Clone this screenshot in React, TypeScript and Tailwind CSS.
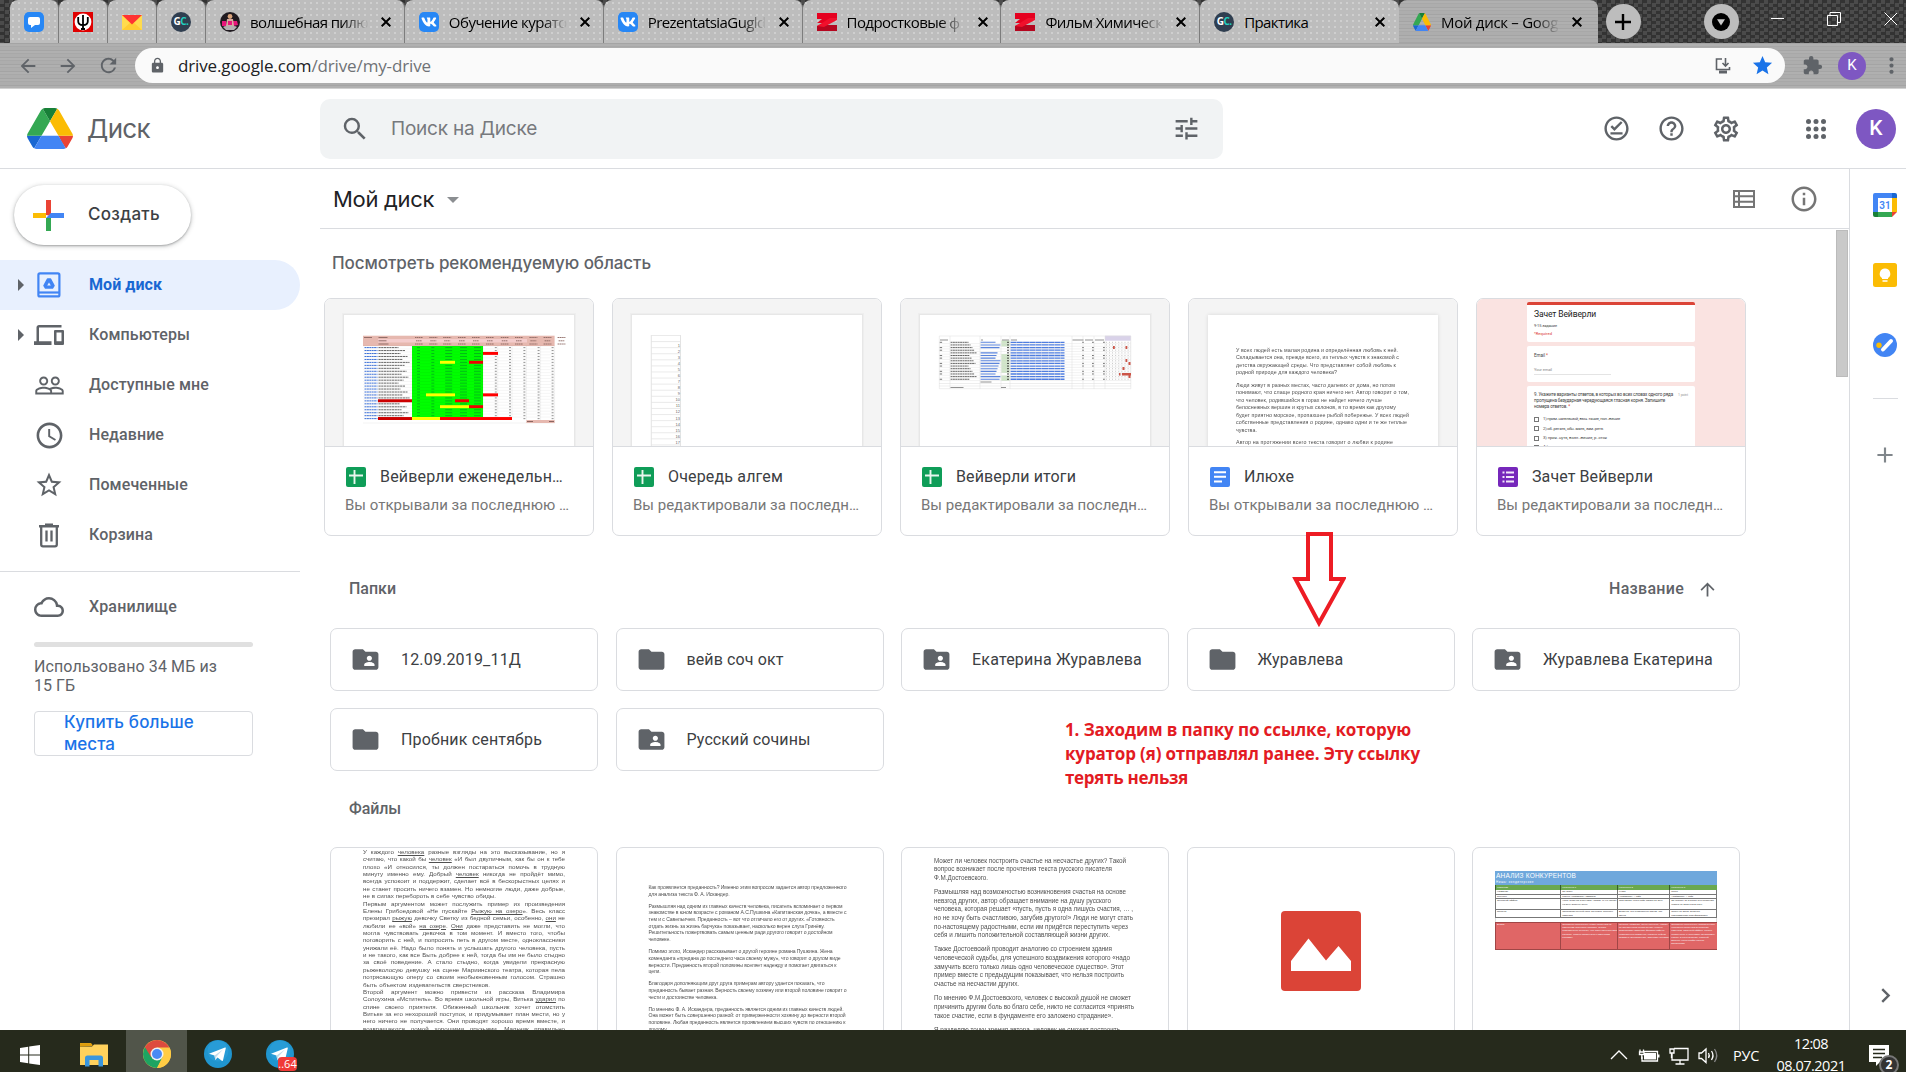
import { useLayoutEffect, useRef, useState, type ReactNode } from "react";
import {
  MdAccessTime, MdArrowBack, MdArrowForward, MdArrowUpward, MdChevronRight, MdCloudQueue, MdDevices, MdExtension,
  MdFolder, MdFolderShared, MdHelpOutline, MdInfoOutline, MdLock, MdMoreVert, MdOutlineOfflinePin,
  MdOutlineSettings, MdPeopleOutline, MdRefresh, MdSearch, MdStar, MdStarBorder, MdTune, MdAdd,
} from "react-icons/md";
import { FaVk } from "react-icons/fa";

const UI = "font-['Open_Sans','Noto_Sans',sans-serif]";
const PRODUCT = "font-['Inter','Roboto',sans-serif]";

/** Single line of text tracked (or word-spaced) to a fixed width. */
function Fit({ w, by = "letter", className = "", children }: { w: number; by?: "letter" | "word"; className?: string; children: ReactNode }) {
  const ref = useRef<HTMLSpanElement>(null);
  const [gap, setGap] = useState(0);
  useLayoutEffect(() => {
    const el = ref.current;
    if (!el) return;
    el.style.letterSpacing = "0px";
    el.style.wordSpacing = "0px";
    const text = el.textContent ?? "";
    const n = by === "letter" ? text.length : text.split(" ").length - 1;
    const g = n > 0 ? (w - el.getBoundingClientRect().width) / n : 0;
    if (by === "letter") el.style.letterSpacing = g + "px";
    else el.style.wordSpacing = g + "px";
    setGap(g);
  }, [w, by]);
  return (
    <span ref={ref} className={"inline-block shrink-0 whitespace-pre " + className} style={by === "letter" ? { letterSpacing: gap } : { wordSpacing: gap }}>
      {children}
    </span>
  );
}

function DriveLogo({ className }: { className: string }) {
  return (
    <svg viewBox="0 0 87.3 78" preserveAspectRatio="none" className={className}>
      <path d="m6.6 66.85 3.85 6.65c.8 1.4 1.95 2.5 3.3 3.3l13.75-23.8h-27.5c0 1.55.4 3.1 1.2 4.5z" fill="#1967d2" />
      <path d="m43.65 25-13.75-23.8c-1.35.8-2.5 1.9-3.3 3.3l-25.4 44a9.06 9.06 0 0 0 -1.2 4.5h27.5z" fill="#34a853" />
      <path d="m73.55 76.8c1.35-.8 2.5-1.9 3.3-3.3l1.6-2.75 7.65-13.25c.8-1.4 1.2-2.95 1.2-4.5h-27.5l5.85 11.5z" fill="#ea4335" />
      <path d="m43.65 25 13.75-23.8c-1.35-.8-2.9-1.2-4.5-1.2h-18.5c-1.6 0-3.15.45-4.5 1.2z" fill="#188038" />
      <path d="m59.8 53h-32.3l-13.75 23.8c1.35.8 2.9 1.2 4.5 1.2h50.8c1.6 0 3.15-.45 4.5-1.2z" fill="#4285f4" />
      <path d="m73.4 26.5-12.7-22c-.8-1.4-1.95-2.5-3.3-3.3l-13.75 23.8 16.15 28h27.45c0-1.55-.4-3.1-1.2-4.5z" fill="#fbbc04" />
    </svg>
  );
}

/* ---------- browser chrome ---------- */

const Vk = () => (
  <div className="flex size-5 items-center justify-center rounded-[5px] bg-[#2787f5] text-white"><FaVk size={16} /></div>
);
const Gc = () => (
  <div className={"flex size-5 items-center justify-center rounded-full bg-[#2f3e50] text-[10px] font-bold tracking-[-0.5px] text-white " + UI}>
    G<span className="text-[#21d0c0]">C.</span>
  </div>
);
const Zred = () => (
  <svg viewBox="0 0 20 20" className="size-5">
    <path d="M0 1h20v5l-8 5H0l5-4H0z" fill="#e5001f" />
    <path d="M20 6 7 13h13v6H0v-5z" fill="#b5061f" />
    <path d="M0 14 13 6h7v2L7 15z" fill="#f0102c" />
  </svg>
);
const ChatIcon = () => (
  <svg viewBox="0 0 20 20" className="size-5">
    <rect width="20" height="20" rx="5" fill="#2787f5" />
    <path d="M6 5h8a2 2 0 0 1 2 2v4a2 2 0 0 1-2 2h-3l-4 3v-3H6a2 2 0 0 1-2-2V7a2 2 0 0 1 2-2z" fill="#fff" />
  </svg>
);
const PsiIcon = () => (
  <div className="flex size-5 items-center justify-center bg-[#e00000]">
    <svg viewBox="0 0 20 20" className="size-5">
      <circle cx="10" cy="10" r="8.4" fill="#fff" />
      <path d="M10 3v14M5.2 5v4.2c0 2.6 2 3.9 4.8 3.9s4.8-1.3 4.8-3.9V5M8 17h4" stroke="#000" strokeWidth="1.8" fill="none" />
    </svg>
  </div>
);
const MailIcon = () => (
  <svg viewBox="0 0 20 20" className="size-5">
    <path d="M0 3h20v15H0z" fill="#ffdb4d" />
    <path d="M0 18 9 10h2l9 8z" fill="#fc3" />
    <path d="M0 3h20l-10 9.5z" fill="#f33" />
  </svg>
);
const PhotoIcon = () => (
  <svg viewBox="0 0 20 20" className="size-5">
    <circle cx="10" cy="10" r="10" fill="#201a20" />
    <path d="M2 9h4l1 5H2zM13 9h4l1 4-5 1z" fill="#e8157b" />
    <circle cx="10" cy="4.5" r="2.4" fill="#d9a47c" />
    <path d="M7 7h6l1 7H6z" fill="#d8a9a0" />
    <path d="M3 15c4-2 10-2 14 0l-3 3H6z" fill="#b5b0b3" />
    <path d="M8 9h4v4H8z" fill="#e8157b" />
  </svg>
);

const TAB = "bg-[#bdbdbd] bg-[radial-gradient(circle,#d0d0d0_0.7px,transparent_1px)] bg-[size:6px_6px]";
const METAL = "bg-[#ababab] bg-[repeating-linear-gradient(180deg,#a4a4a4_0_1px,#b0b0b0_1px_3px,#a8a8a8_3px_4px,#adadad_4px_7px)]";

const pinned = [<ChatIcon />, <PsiIcon />, <MailIcon />, <Gc />];
const tabs: [ReactNode, string, number, boolean?][] = [
  [<PhotoIcon />, "волшебная пилю", 118],
  [<Vk />, "Обучение курато", 118],
  [<Vk />, "PrezentatsiaGugld", 118],
  [<Zred />, "Подростковые ф", 113],
  [<Zred />, "Фильм Химическ", 117],
  [<Gc />, "Практика", 64],
  [<DriveLogo className="size-[18px]" />, "Мой диск – Goog", 117, true],
];

function TabClose() {
  return (
    <svg viewBox="0 0 10 10" className="size-[10px] shrink-0"><path d="M.7.7l8.6 8.6M9.3.7.7 9.3" stroke="#000" strokeWidth="2" /></svg>
  );
}

function TabStrip() {
  return (
    <div className="flex h-[43px] bg-[#3c3c3c] bg-[repeating-conic-gradient(#333_0_25%,#4b4b4b_0_50%)] bg-[size:9px_7px] pl-[10px]">
      {pinned.map((icon, i) => (
        <div key={i} className={"flex h-[43px] w-[49px] items-center justify-center rounded-t-[8px] border-r border-[#7d7d7d] " + TAB}>{icon}</div>
      ))}
      {tabs.map(([icon, label, w, active], i) => (
        <div key={i} className={"flex h-[43px] w-[198.85px] items-center rounded-t-[8px] pl-[14px] " + (active ? METAL : TAB + (i < 5 ? " border-r border-[#7d7d7d]" : ""))}>
          {icon}
          <div className={"ml-[10px] w-[119px] overflow-hidden text-[15px] leading-5 text-black " + UI + (i === 5 ? "" : " [mask-image:linear-gradient(90deg,#000_78%,transparent_100%)]")}>
            <Fit w={w}>{label}</Fit>
          </div>
          <div className="ml-3"><TabClose /></div>
        </div>
      ))}
      <div className="ml-2 mt-1 flex size-[35px] items-center justify-center rounded-full bg-[#bdbdbd]">
        <svg viewBox="0 0 16 16" className="size-4"><path d="M8 0v16M0 8h16" stroke="#000" strokeWidth="2.4" /></svg>
      </div>
      <div className="ml-[63px] mt-1 flex size-[35px] items-center justify-center rounded-full bg-[#bdbdbd]">
        <svg viewBox="0 0 18 18" className="size-[18px]"><circle cx="9" cy="9" r="9" fill="#000" /><path d="M5 6.2h8L9 12.4z" fill="#c9c9c9" /></svg>
      </div>
      <svg viewBox="0 0 126 14" className="ml-[32px] mt-3 h-[14px] w-[126px]" stroke="#fff" fill="none">
        <path d="M0 6.5h13M56.500 3.500h10v10h-10zM59 3V.5h10.500v10H67M113.500.5l13 13M126.500.5l-13 13" />
      </svg>
    </div>
  );
}

function Toolbar() {
  return (
    <div className={"flex h-[46px] items-center border-b border-[#d0d0d0] pl-[17px] text-[#5f6368] " + METAL}>
      <MdArrowBack size={22} />
      <MdArrowForward size={22} className="ml-[18px]" />
      <MdRefresh size={23} className="ml-[18px]" />
      <div className="ml-[15px] flex h-[35px] w-[1650px] items-center rounded-full bg-[#fafafa] pl-[14px]">
        <MdLock size={17} />
        <div className={"ml-[12px] text-[17px] leading-6 text-[#202124] " + UI}>
          <Fit w={253}>drive.google.com<span className="text-[#6f7276]">/drive/my-drive</span></Fit>
        </div>
        <svg viewBox="0 0 18 18" className="ml-auto size-[18px]" fill="none" stroke="#5f6368" strokeWidth="1.6">
          <path d="M8 2H2.500v10.500h13V10M11.500 1v7.500M8.500 6l3 3 3-3" /><path d="M5 15h8" strokeWidth="3" />
        </svg>
        <MdStar size={23} className="ml-[19px] mr-[11px] text-[#1a73e8]" />
      </div>
      <MdExtension size={21} className="ml-[17px]" />
      <div className="ml-[15px] flex size-7 items-center justify-center rounded-full bg-[#7e57c2] font-['Roboto',sans-serif] text-[15px] text-white">K</div>
      <MdMoreVert size={25} className="ml-[13px]" />
    </div>
  );
}

/* ---------- Drive header ---------- */

function Header() {
  return (
    <header className="flex h-20 items-center border-b border-[#dadce0] bg-white pl-[27px] text-[#5f6368]">
      <DriveLogo className="h-[41px] w-[46px]" />
      <div className={"ml-[14px] w-[233px] text-[26px] leading-8 " + PRODUCT}><Fit w={63}>Диск</Fit></div>
      <div className="flex h-[60px] w-[903px] items-center rounded-[10px] bg-[#f1f3f4] pl-[20px]">
        <MdSearch size={30} />
        <div className={"ml-[21px] text-[19px] leading-7 text-[#77797d] " + PRODUCT}><Fit w={146}>Поиск на Диске</Fit></div>
        <MdTune size={29} className="ml-auto mr-[22px]" />
      </div>
      <MdOutlineOfflinePin size={29} className="ml-[379px]" />
      <MdHelpOutline size={29} className="ml-[26px]" />
      <MdOutlineSettings size={30} className="ml-[25px]" />
      <svg viewBox="0 0 20 20" className="ml-[65px] size-5" fill="#5f6368">
        {[2.5, 10, 17.5].map((x) => [2.5, 10, 17.5].map((y) => <circle key={x + "-" + y} cx={x} cy={y} r="2.5" />))}
      </svg>
      <div className="ml-[30px] flex size-10 items-center justify-center rounded-full bg-[#7e57c2] font-['Roboto',sans-serif] text-[21px] font-medium text-white">K</div>
    </header>
  );
}

/* ---------- sidebar ---------- */

const MyDrive = () => (
  <svg viewBox="0 0 24 26" className="h-[26px] w-6" fill="none" stroke="#4285f4" strokeWidth="2.2">
    <rect x="1.4" y="1.400" width="21" height="23" rx="1.500" />
    <path d="M2 20.500h20" />
    <path d="M10.500 7h3l3.500 6.500-1.500 2.500h-7L7 13.500z" fill="#4285f4" strokeLinejoin="round" strokeWidth="1.500" />
    <path d="m12 10.500 1.800 3h-3.600z" fill="#e8f0fe" stroke="none" />
  </svg>
);
const Trash = () => (
  <svg viewBox="0 0 22 25" className="h-[25px] w-[22px]" fill="none" stroke="#5f6368" strokeWidth="2.400">
    <path d="M1 3.200h20M7 1.600h8" /><path d="M3.200 4v17.500q0 1.800 1.800 1.800h12q1.800 0 1.800-1.800V4M8.500 7.500v11M13.500 7.500v11" strokeWidth="2.300" />
  </svg>
);

const nav: [ReactNode, string, number, boolean, boolean][] = [
  [<MyDrive />, "Мой диск", 73, true, true],
  [<MdDevices size={30} />, "Компьютеры", 101, true, false],
  [<MdPeopleOutline size={31} />, "Доступные мне", 120, false, false],
  [<MdAccessTime size={31} />, "Недавние", 75, false, false],
  [<MdStarBorder size={30} />, "Помеченные", 99, false, false],
  [<Trash />, "Корзина", 64, false, false],
];

function Sidebar() {
  return (
    <aside className="w-[320px] shrink-0 font-['Roboto',sans-serif] text-[#5f6368]">
      <div className="ml-[14px] mt-4 flex h-[60px] w-[177px] items-center rounded-full bg-white pl-[19px] shadow-[0_1px_2px_rgba(60,64,67,0.35),0_1px_4px_1px_rgba(60,64,67,0.2)]">
        <svg viewBox="0 0 31 31" className="size-[31px]">
          <path d="M13 0h5v16l-5-1z" fill="#ea4335" /><path d="M0 13h13v5H0z" fill="#fbbc04" />
          <path d="M18 13h13v5H16z" fill="#4285f4" /><path d="M13 18h5v13h-5z" fill="#34a853" /><path d="m13 18 5-5v5z" fill="#4285f4" />
        </svg>
        <div className={"ml-[24px] text-[17px] font-medium text-[#3c4043] " + PRODUCT}><Fit w={72}>Создать</Fit></div>
      </div>
      <nav className="mt-[15px]">
        {nav.map(([icon, label, w, arrow, active]) => (
          <div key={label} className={"flex h-[50px] w-[300px] items-center rounded-r-full pl-[18px] " + (active ? "bg-[#e8f0fe] text-[#1967d2]" : "")}>
            <svg viewBox="0 0 6 12" className="h-3 w-[6px] text-[#5f6368]">{arrow && <path d="M0 0l6 6-6 6z" fill="currentColor" />}</svg>
            <div className="ml-[9px] flex w-8 justify-center">{icon}</div>
            <div className={"ml-[24px] text-[16px] leading-5 " + (active ? "font-bold" : "font-medium")}><Fit w={w}>{label}</Fit></div>
          </div>
        ))}
      </nav>
      <div className="mt-[11px] w-[300px] border-t border-[#dadce0] pl-[34px]">
        <div className="flex h-[70px] items-center">
          <MdCloudQueue size={30} />
          <div className="ml-[25px] text-[16px] font-medium"><Fit w={88}>Хранилище</Fit></div>
        </div>
        <div className="h-[5px] w-[219px] rounded-sm bg-[#e0e0e0]" />
        <div className="mt-[10px] text-[16px] leading-[19px]">
          <div><Fit w={183}>Использовано 34 МБ из</Fit></div>
          <div><Fit w={41}>15 ГБ</Fit></div>
        </div>
        <div className={"mt-[16px] h-[45px] w-[219px] rounded-[4px] border border-[#dadce0] pl-[29px] text-[17px] font-medium leading-[22px] text-[#1a73e8] " + PRODUCT}>
          <div className="-mt-px"><Fit w={130}>Купить больше</Fit></div>
          <div><Fit w={51}>места</Fit></div>
        </div>
      </div>
    </aside>
  );
}

/* ---------- suggested files ---------- */

const sheetX = [412, 426.3, 440.2, 455, 469, 483, 497.8, 512, 526.4, 540.6, 554.6];
const marks: [number, number, number, string][] = [
  [2, 483, 498, "#f00"], [5, 440, 455, "#ff0"], [5, 469, 483, "#e00"], [16, 426, 455, "#ff0"], [16, 483, 498, "#f00"],
  [18, 378, 412, "#c00"], [18, 455, 469, "#e00"], [20, 440, 469, "#ff0"], [20, 469, 483, "#e00"],
  [24, 378, 412, "#c00"], [24, 412, 440, "#ff0"], [24, 440, 512, "#f00"],
];

function SheetScores() {
  const rows = Array.from({ length: 25 }, (_, i) => 346 + i * 2.96);
  return (
    <svg viewBox="325 299 268 147" className="h-[147px] w-[268px]">
      <Page x={344} />
      <rect x="363" y="335.700" width="191.600" height="10.300" fill="#e6b8af" />
      <rect x="378" y="339" width="149" height="3.500" fill="#f4cccc" />
      {sheetX.map((x) => <path key={x} d={`M${x + 3} 337.500h8M${x + 4} 340.800h6M${x + 3} 344h8`} stroke="#8a6560" strokeWidth=".9" strokeDasharray="1.500 .4" />)}
      <path d="M364 337.500h8M378.500 337.500h9M378.500 340.800h8M378.500 344h10" stroke="#8a6560" strokeWidth=".9" />
      <rect x="412" y="346" width="71" height="71" fill="#0f0" />
      {rows.map((y, i) => (
        <g key={y}>
          <path d={`M363 ${y}h191.600`} stroke="#000" strokeOpacity=".1" strokeWidth=".4" />
          <path d={`M364.500 ${y + 1.600}h13`} stroke="#3b6fd6" strokeWidth="1" strokeDasharray="2 .4" />
          <path d={`M378.500 ${y + 1.600}h${20 + ((i * 7) % 12)}`} stroke="#555" strokeWidth=".9" strokeDasharray="2.200 .5" />
          {sheetX.slice(0, 5).map((x, k) => <path key={x} d={`M${x + 5} ${y + 1.600}h${k > 1 ? 7 : 3}`} stroke="#063" strokeOpacity=".55" strokeWidth=".8" />)}
          {sheetX.slice(6).map((x) => <path key={x} d={`M${x - 3} ${y + 1.600}h2`} stroke="#888" strokeWidth=".9" />)}
        </g>
      ))}
      {marks.map(([r, a, b, c]) => <rect key={r + "-" + a} x={a} y={346 + r * 2.960} width={b - a} height="2.960" fill={c} />)}
      <path d="M483 346v71M497.800 346v71M512 346v71M526.400 346v77M540.600 346v77M554.600 346v77M363 423h192" stroke="#000" strokeOpacity=".1" strokeWidth=".5" />
      <rect x="526.400" y="420" width="28.200" height="3" fill="#e6b8af" />
      <path d="M527 421.500h6M549 421.500h5" stroke="#8a6560" />
    </svg>
  );
}

function Page({ x }: { x: number }) {
  return (
    <>
      <rect x={x - 2} y="313" width="234" height="140" fill="#eeeeee" />
      <rect x={x - 1} y="314" width="232" height="140" fill="#e7e7e7" />
      <rect x={x} y="315" width="230" height="140" fill="#fff" />
    </>
  );
}

function SheetQueue() {
  return (
    <svg viewBox="613 299 268 147" className="h-[147px] w-[268px]">
      <Page x={632} />
      <path d="M651.300 335v112M680.500 335v112" stroke="#dcdcdc" strokeWidth=".8" />
      {Array.from({ length: 19 }, (_, i) => (
        <g key={i}>
          <path d={`M651 ${335.500 + i * 6.080}h29.500`} stroke="#e4e4e4" strokeWidth=".8" />
          {i > 0 && <text x="680" y={340.500 + i * 6.080} textAnchor="end" fontSize="4" fill="#666" fontFamily="Liberation Sans, sans-serif">{i}</text>}
        </g>
      ))}
    </svg>
  );
}

function SheetTotals() {
  const rows = Array.from({ length: 15 }, (_, i) => 342.300 + i * 2.640);
  return (
    <svg viewBox="901 299 268 147" className="h-[147px] w-[268px]">
      <Page x={920} />
      <rect x="1105" y="335.700" width="25.800" height="5" fill="#d9d2e9" />
      <path d="M1001.300 340.500h8.400v6h-8.400zM1001.300 354h8.400v19h-8.400zM1001.300 375.500h8.400v5.500h-8.400z" fill="#cfe5c7" />
      {rows.map((y, i) => (
        <g key={y}>
          <path d={`M939.300 ${y + 1.300}h191.700`} stroke="#ddd" strokeWidth=".4" />
          {i !== 3 && <path d={`M980.500 ${y}h${15 + ((i * 5) % 6)}`} stroke="#5b84dc" strokeWidth="1.100" />}
          <path d={`M1007 ${y}h2`} stroke="#444" strokeWidth="1" />
          <path d={`M1010.500 ${y}h${54 + ((i * 7) % 7)}`} stroke="#4f7ddf" strokeWidth="1.300" strokeDasharray="6 .3" />
          <path d={`M950.500 ${y}h${18 + ((i * 11) % 9)}`} stroke="#555" strokeWidth=".9" strokeDasharray="2 .4" />
          {i % 3 !== 1 && <path d={`M939.600 ${y}h2.500M1082 ${y}h2M1092 ${y}h2M1103 ${y}h2`} stroke="#666" strokeWidth=".9" />}
          <path d={`M1106 ${y}h25`} stroke="#aaa" strokeWidth=".8" strokeDasharray=".8 2.300" />
        </g>
      ))}
      <path d="M939.300 336h191.500v52.700H939.300zM950 336v53M980 336v53M1001 336v53M1010 336v53M1072 336v53M1083 336v53M1094 336v53M1105 336v53M939 383.500h192M939 386h192" fill="none" stroke="#ddd" strokeWidth=".5" />
      <path d="M940 340h8M981 340h2M1002 340h7M1011 340h6M1072.500 340h11M1085 340h8M1095 340h9M950.500 387.500h13M1001 387.500h5M980.500 382h11" stroke="#777" strokeWidth=".8" />
      <path d="M1113 346h1.800v3h-1.800zM1125.500 346h1.800v3h-1.800zM1125.500 359h1.800v3h-1.800zM1128.500 362h2v3h-2zM1122.500 367h2v3h-2zM1119 373h1.500v2.500h-1.500zM1122 373h9v2.500h-9zM1128.500 375.500h2v2.500h-2z" fill="#cc5548" />
    </svg>
  );
}

type Line = [string, number] | null;

/** Lines of a document page; null leaves a paragraph gap. */
function DocText({ lines, by = "letter", row, gap, className }: { lines: Line[]; by?: "letter" | "word"; row: number; gap: number; className: string }) {
  return (
    <div className={"text-[#505050] blur-[0.3px] font-['Liberation_Sans',sans-serif] " + className}>
      {lines.map((l, i) =>
        l === null ? <div key={i} style={{ height: gap }} /> : (
          <div key={i} className="flex items-center" style={{ height: row }}>
            <Fit w={l[1]} by={by}>{l[0].split("_").map((s, k) => (k % 2 ? <u key={k}>{s}</u> : s))}</Fit>
          </div>
        ),
      )}
    </div>
  );
}

const homeland: Line[] = [
  ["У всех людей есть малая родина и определённая любовь к ней.", 162],
  ["Складывается она, прежде всего, из теплых чувств к знакомой с", 163],
  ["детства окружающей среды. Что представляет собой любовь к", 160],
  ["родной природе для каждого человека?", 101], null,
  ["Люди живут в разных местах, часто далеких от дома, но потом", 159],
  ["понимают, что слаще родного края ничего нет. Автор говорит о том,", 173],
  ["что человек, родившийся в горах не найдет ничего лучше", 146],
  ["белоснежных вершин и крутых склонов, в то время как другому", 160],
  ["будет приятно морское, пропахшее рыбой побережье. У всех людей", 173],
  ["собственные представления о родине, однако одни и те же теплые", 171],
  ["чувства.", 21], null,
  ["Автор на протяжении всего текста говорит о любви к родине", 157],
];

function FormThumb() {
  return (
    <div className="flex h-[147px] justify-center overflow-hidden bg-[#fae3e1] pt-[3px] font-['Roboto',sans-serif] text-[#444]">
      <div className="w-[168px]">
        <div className="h-10 rounded-[2px] border-t-[3px] border-[#db4437] bg-white pl-[7px] pt-[3px]">
          <div className="text-[8.500px] leading-[12px] text-[#222]"><Fit w={62}>Зачет Вейверли</Fit></div>
          <div className="mt-[2px] text-[4px] leading-[8px]"><Fit w={23}>9-15 задание</Fit></div>
          <div className="text-[4px] leading-[8px] text-[#d93025]"><Fit w={18}>*Required</Fit></div>
        </div>
        <div className="mt-1 h-9 rounded-[2px] bg-white pl-[7px] pt-[5px] text-[4.500px] leading-[9px]">
          <div><Fit w={14}>Email <span className="text-[#d93025]">*</span></Fit></div>
          <div className="mt-[6px] w-[77px] border-b border-[#e4e4e4] text-[4px] leading-[8px] text-[#888]"><Fit w={18}>Your email</Fit></div>
        </div>
        <div className="mt-1 h-[70px] rounded-[2px] bg-white pl-[7px] pt-[6px] text-[4.600px] leading-[6.200px]">
          <div className="flex"><Fit w={139}>9. Укажите варианты ответов, в которых во всех словах одного ряда</Fit><Fit w={10} className="ml-[5px] text-[3.500px] text-[#999]">1 point</Fit></div>
          <div><Fit w={131}>пропущена безударная чередующаяся гласная корня. Запишите</Fit></div>
          <div><Fit w={36}>номера ответов. <span className="text-[#d93025]">*</span></Fit></div>
          <div className="mt-[4px]">
            {([["1) прим..нательный, выч..тание, пол..жение", 77], ["2) об..регать, обн..мать, зам..реть", 60], ["3) прик..нуть, возл..жение, р..сток", 64], ["4) зар..сли, выск..чка", 70]] as [string, number][]).map(([t, w]) => (
              <div key={t} className="flex h-[9.400px] items-center gap-[4px] text-[4.200px]"><div className="size-[5px] border border-[#777]" /><Fit w={w}>{t}</Fit></div>
            ))}
          </div>
        </div>
      </div>
    </div>
  );
}

function FileBadge({ kind }: { kind: "sheet" | "doc" | "form" }) {
  return (
    <svg viewBox="0 0 20 20" className="size-5" fill="none" stroke="#fff" strokeWidth="2">
      <rect width="20" height="20" rx="2" stroke="none" fill={kind === "sheet" ? "#0f9d58" : kind === "doc" ? "#4285f4" : "#7627bb"} />
      {kind === "sheet" && <path d="M3 8.500h14M8.500 3v14" stroke="#e8f6ee" strokeWidth="1.900" />}
      {kind === "doc" && <path d="M4 5.300h12M4 9.700h12M4 14.500h8" />}
      {kind === "form" && <path d="M4.500 5.500h2M8 5.500h8M4.500 10h2M8 10h8M4.500 14.500h2M8 14.500h8" stroke="#f1e6fa" />}
    </svg>
  );
}

function Suggested() {
  const opened: [string, number] = ["Вы открывали за последнюю …", 224];
  const edited: [string, number] = ["Вы редактировали за последн…", 226];
  const items: ["sheet" | "doc" | "form", string, number, [string, number], ReactNode][] = [
    ["sheet", "Вейверли еженедельн…", 183, opened, <SheetScores />],
    ["sheet", "Очередь алгем", 115, edited, <SheetQueue />],
    ["sheet", "Вейверли итоги", 120, edited, <SheetTotals />],
    ["doc", "Илюхе", 50, opened,
      <div className="ml-[19px] mt-4 h-[140px] w-[230px] bg-white pl-7 pt-[32px] shadow-[0_0_4px_rgba(0,0,0,0.12)]">
        <DocText lines={homeland} row={7.560} gap={4.600} className="text-[5.300px]" />
      </div>],
    ["form", "Зачет Вейверли", 121, edited, <FormThumb />],
  ];
  return (
    <div className="ml-1 flex gap-[18px]">
      {items.map(([kind, title, w, [sub, sw], thumb]) => (
        <div key={title} className="h-[238px] w-[270px] shrink-0 overflow-hidden rounded-[7px] border border-[#dadce0] bg-white">
          <div className="h-[148px] overflow-hidden border-b border-[#dadce0] bg-[#f4f4f4]">{thumb}</div>
          <div className="flex items-center pl-[21px] pt-[18px]">
            <FileBadge kind={kind} />
            <div className="ml-[14px] text-[16px] leading-6 text-[#3c4043]"><Fit w={w}>{title}</Fit></div>
          </div>
          <div className="mt-[6px] pl-[20px] text-[15px] leading-5 text-[#777]"><Fit w={sw}>{sub}</Fit></div>
        </div>
      ))}
    </div>
  );
}

/* ---------- folders and files ---------- */

const folders: [string, number, boolean][] = [
  ["12.09.2019_11Д", 120, true], ["вейв соч окт", 97, false], ["Екатерина Журавлева", 170, true], ["Журавлева", 86, false],
  ["Журавлева Екатерина", 170, true], ["Пробник сентябрь", 141, false], ["Русский сочины", 124, true],
];

const essay1: Line[] = [
  ["У каждого _человека_ разные взгляды на это высказывание, но я", 202],
  ["считаю, что какой бы _человек_ «И был двуличным, как бы он к тебе", 202],
  ["плохо «И относился, ты должен постараться помочь в трудную", 202],
  ["минуту именно ему. Добрый _человек_ никогда не пройдёт мимо,", 202],
  ["всегда успокоит и поддержит, сделает всё в бескорыстных целях и", 202],
  ["не станет просить ничего взамен. Но немногие люди, даже добрые,", 202],
  ["не в силах перебороть в себе чувство обиды.", 133],
  ["Первым аргументом может послужить пример из произведения", 202],
  ["Елены Грибоедовой «Не пускайте _Рыжую на озеро_». Весь класс", 202],
  ["презирал _рыжую_ девочку Светку из бедной семьи, особенно, _они_ не", 202],
  ["любили ее «вой» _на озере_. _Они_ даже представить не могли, что", 202],
  ["могла чувствовать девочка в том момент. И вместо того, чтобы", 202],
  ["поговорить с ней, и попросить петь в другом месте, одноклассники", 202],
  ["унижали её. Надо было понять и услышать другого человека, пусть", 202],
  ["и не такого, как все Быть добрее к ней, тогда бы им не было стыдно", 202],
  ["за своё поведение. А стало стыдно, когда увидели прекрасную", 202],
  ["рыжеволосую девушку на сцене Мариинского театра, которая пела", 202],
  ["потрясающую оперу со своим необыкновенным голосом. Страшно", 202],
  ["быть объектом издевательств сверстников.", 127],
  ["Второй аргумент можно привести из рассказа Владимира", 202],
  ["Солоухина «Мститель». Во время школьной игры, Витька _ударил_ по", 202],
  ["спине своего приятеля. Обиженный школьник хочет отомстить", 202],
  ["Витьке за его нехороший поступок, и придумывает план мести, но у", 202],
  ["него ничего не получается. Они проводят хорошо время вместе, и", 202],
  ["возвращаются домой хорошими друзьями. Мальчик правильно", 202],
];
const essay2: Line[] = [
  ["Как проявляется преданность? Именно этим вопросом задается автор предложенного", 198],
  ["для анализа текста Ф. А. Искандер.", 81], null,
  ["Размышляя над одним из главных качеств человека, писатель вспоминает о первом", 194],
  ["знакомстве в юном возрасте с романом А.С.Пушкина «Капитанская дочка», а вместе с", 198],
  ["тем и с Савельичем. Преданность – вот что отличало его от других. «Готовность", 186],
  ["отдать жизнь за жизнь барчука» показывает, насколько верен слуга Гринёву.", 176],
  ["Решительность пожертвовать самым ценным ради другого говорит о достойном", 184],
  ["человеке.", 22], null,
  ["Помимо этого, Искандер рассказывает о другой героине романа Пушкина. Жена", 184],
  ["коменданта «предана до последнего часа своему мужу», что говорит о другом виде", 192],
  ["верности. Преданность второй половины вселяет надежду и помогает двигаться к", 188],
  ["цели.", 12], null,
  ["Благодаря дополняющим друг друга примерам автору удается показать, что", 176],
  ["преданность бывает разная. Верность своему хозяину или второй половине говорит о", 198],
  ["чести и достоинстве человека.", 69], null,
  ["По мнению Ф. А. Искандера, преданность является одним из главных качеств людей.", 195],
  ["Она может быть совершенно разной: от приверженности хозяину до верности второй", 197],
  ["половине. Любая преданность является проявлением высших чувств по отношению к", 197],
  ["другому.", 19],
];
const essay3: Line[] = [
  ["Может ли человек построить счастье на несчастье других? Такой", 192],
  ["вопрос возникает после прочтения текста русского писателя", 178],
  ["Ф.М.Достоевского.", 54], null,
  ["Размышляя над возможностью возникновения счастья на основе", 192],
  ["невзгод других, автор обращает внимание на душу русского", 177],
  ["человека, которая решает «пусть, пусть я одна лишусь счастия, … ,", 199],
  ["но не хочу быть счастливою, загубив другого!» Люди не могут стать", 199],
  ["по-настоящему радостными, если им придётся переступить через", 194],
  ["себя и лишить положительной составляющей жизни других.", 176], null,
  ["Также Достоевский проводит аналогию со строением здания", 178],
  ["человеческой судьбы, для успешного воздвижения которого «надо", 196],
  ["замучить всего только лишь одно человеческое существо». Этот", 190],
  ["пример вместе с предыдущим показывает, что нельзя построить", 190],
  ["счастье на несчастии других.", 85], null,
  ["По мнению Ф.М.Достоевского, человек с высокой душой не сможет", 197],
  ["причинить другим боль во благо себе, никто не согласится «принять", 200],
  ["такое счастие, если в фундаменте его заложено страдание».", 179], null,
  ["Я разделяю точку зрения автора, человек не сможет построить", 186],
];

const cols = "grid grid-cols-[65.300px_56.700px_52.300px_47.700px]";
const competitors: [string, string[]][] = [
  ["h-[4.700px]", ["Название", "No Crazy", "Кулак", "Тесто"]],
  ["h-[4.600px]", ["Ресурсы", "только «Instagram» (визитка)", "«Instagram» + сайт", "«Instagram» + сайт"]],
  ["h-[11px]", ["Основной оффер", "Хлеб, выпечка и пончики. Низкие 49-90 (акция на весь выпечку 50%)", "При заказе через сайт скидка до 50%", "За неделю до и после дня рождения скидка на заказ торта 15%"]],
  ["h-[7.400px]", ["Продукт", "Свежеиспеченный хлеб, вкусовые десерты, завтраки", "Выпечка, эко-кулинарные блюда, эко пицца", "Торты на заказ, выпечка, шведоминские полуфабрикаты"]],
];
const findings = [
  "Вывод",
  "Основные конкуренты. Мало раскрутки на заведении открытого каравая, делает современные десерты, уже заскучают пончики горожан. Можно столкнуться с минусами рекламы",
  "Простое название, меню обычное, низкие по идеальности среди других. Можно попробовать изменить формат кафе/ту современных привычек, которые сейчас привлечь предложения, запустить рекламу",
  "Основные конкуренты. Используются несколько раскрутки выделения клиентов. Сильный оффер. Можно столкнуться с удешевить по магазину работу и консультация, который вперше через крафт нашего мастерства",
];

function CompetitorTable() {
  return (
    <div className="ml-[22px] mt-[23px] w-[222px] font-['Liberation_Sans',sans-serif] text-[2.500px] leading-[3.300px] text-[#222]">
      <div className="h-[14px] bg-[#6fa8dc] pl-px pt-px text-white">
        <div className="text-[6.500px] leading-[8px]"><Fit w={80}>АНАЛИЗ КОНКУРЕНТОВ</Fit></div>
        <div className="text-[3px] leading-[4px]"><Fit w={38}>Ниша: кондитерские</Fit></div>
      </div>
      <div className={cols + " h-[5px] bg-[#6aa84f] text-white"}>
        {["Критерии", "Конкурент 1", "Конкурент 2", "Конкурент 3"].map((t) => <div key={t} className="truncate border-l border-[#385c29] pl-px pt-px">{t}</div>)}
      </div>
      {competitors.map(([h, cells]) => (
        <div key={h} className={cols + " border-b border-r border-[#777] " + h}>
          {cells.map((t, i) => <div key={i} className="overflow-hidden border-l border-[#777] pl-px">{t}</div>)}
        </div>
      ))}
      <div className="h-[4px] border-x border-[#ddd]" />
      <div className={cols + " h-[28px] bg-[#e06666] text-white"}>
        {findings.map((t) => <div key={t} className="overflow-hidden border border-r-0 border-[#a04646] pl-px">{t}</div>)}
      </div>
    </div>
  );
}

const fileCard = "h-[230px] overflow-hidden rounded-[7px] border border-[#dadce0] bg-white ";

function Content() {
  return (
    <div className="min-w-0 flex-1 overflow-hidden font-['Roboto',sans-serif]">
      <div className={"flex h-[69px] items-center pl-[12px] text-[17px] font-medium text-[#5f6368] " + PRODUCT}>
        <Fit w={319}>Посмотреть рекомендуемую область</Fit>
      </div>
      <Suggested />
      <div className="flex h-[92px] items-center pl-[29px] pt-[14px] text-[16px] font-medium text-[#5f6368]">
        <Fit w={47}>Папки</Fit>
        <div className="ml-auto mr-[118px] flex items-center"><Fit w={75}>Название</Fit><MdArrowUpward size={21} className="ml-[13px]" /></div>
      </div>
      <div className="ml-[10px] grid grid-cols-[repeat(5,268px)] gap-x-[17.500px] gap-y-[17px]">
        {folders.map(([name, w, shared]) => (
          <div key={name} className="flex h-[63px] items-center rounded-[7px] border border-[#dadce0] pl-[19px]">
            {shared ? <MdFolderShared size={31} className="text-[#5f6368]" /> : <MdFolder size={31} className="text-[#5f6368]" />}
            <div className="ml-[20px] text-[16px] leading-6 text-[#3c4043]"><Fit w={w}>{name}</Fit></div>
          </div>
        ))}
      </div>
      <div className="flex h-[76px] items-center pl-[29px] text-[16px] font-medium text-[#5f6368]"><Fit w={52}>Файлы</Fit></div>
      <div className="ml-[10px] grid grid-cols-[repeat(5,268px)] gap-x-[17.500px]">
        <div className={fileCard + "pl-8"}><DocText lines={essay1} by="word" row={7.360} gap={0} className="text-[6.200px]" /></div>
        <div className={fileCard + "pl-8 pt-[36.500px]"}><DocText lines={essay2} row={6.700} gap={5.300} className="text-[5.100px]" /></div>
        <div className={fileCard + "pl-8 pt-[8px]"}><DocText lines={essay3} row={8.700} gap={5.300} className="text-[6.300px]" /></div>
        <div className={fileCard + "pl-[93px] pt-[63px]"}>
          <svg viewBox="0 0 80 80" className="size-20"><rect width="80" height="80" rx="4" fill="#db4437" /><path d="M10 50 27.500 27.500 45 49.500 57.500 35 70 50v10H10z" fill="#fff" /></svg>
        </div>
        <div className={fileCard}><CompetitorTable /></div>
      </div>
    </div>
  );
}

function SidePanel() {
  return (
    <div className="flex w-[57px] shrink-0 flex-col items-center border-l border-[#dadce0] pl-[14px] pt-[24px]">
      <svg viewBox="0 0 24 24" className="size-6 shrink-0">
        <path d="M2 0h17v5H5v14H0V2q0-2 2-2z" fill="#4285f4" /><path d="M19 0h3q2 0 2 2v3h-5z" fill="#1967d2" />
        <path d="M19 5h5v14h-5z" fill="#fbbc04" /><path d="M5 19h14v5H5z" fill="#34a853" /><path d="M0 19h5v5H2q-2 0-2-2z" fill="#188038" /><path d="M19 19h5l-5 5z" fill="#ea4335" />
        <text x="12" y="15.800" textAnchor="middle" fontSize="10" fontWeight="600" fill="#4285f4" fontFamily="Roboto, sans-serif">31</text>
      </svg>
      <svg viewBox="0 0 24 24" className="mt-[46px] size-6 shrink-0">
        <rect width="24" height="24" rx="2.500" fill="#fbbc04" /><path d="M12 5.500a5.200 5.200 0 0 0-3 9.500v1h6v-1a5.200 5.200 0 0 0-3-9.500zM9.500 17.200h5v1.600h-5z" fill="#fff" />
      </svg>
      <svg viewBox="0 0 24 24" className="mt-[46px] size-6 shrink-0">
        <circle cx="12" cy="12" r="12" fill="#4285f4" /><circle cx="6" cy="12.200" r="2.700" fill="#fbbc04" /><path d="m10 16.500 8-8.500" stroke="#fff" strokeWidth="4" strokeLinecap="round" />
      </svg>
      <div className="mt-[41px] h-px w-[25px] bg-[#dadce0]" />
      <MdAdd size={26} className="mt-[43px] shrink-0 text-[#80868b]" />
      <MdChevronRight size={29} className="mb-[20px] mt-auto shrink-0 text-[#5f6368]" />
    </div>
  );
}

/* ---------- taskbar ---------- */

function Telegram() {
  return (
    <svg viewBox="0 0 28 28" className="size-7">
      <circle cx="14" cy="14" r="14" fill="#2095cf" /><circle cx="14" cy="11" r="10.500" fill="#2ea2dc" opacity=".6" />
      <path d="M5 13.800 21 7.500q1-.3.800.8L19 20.300q-.3 1-1.200.5L13.500 17.600l-2.200 2.300-.8-4.300z" fill="#fff" /><path d="m10.500 15.600 8.500-6-6.500 7-1.200 3.300z" fill="#c4dcea" />
    </svg>
  );
}

function Taskbar() {
  return (
    <div className={"flex h-[42px] overflow-hidden bg-[#262a1c] text-white " + UI}>
      <svg viewBox="0 0 20 20" className="ml-5 mt-[15px] size-5" fill="#fff"><path d="M0 3l8.200-1.200v7.700H0zM9.200 1.600 20 0v9.500H9.200zM0 10.500h8.200v7.700L0 17zM9.200 10.500H20V20L9.200 18.400z" /></svg>
      <svg viewBox="0 0 28 24" className="ml-10 mt-[13px] h-6 w-7">
        <path d="M0 0h11l2 2.500H0z" fill="#e0a010" /><path d="M0 3.500h12L14 1.500h14V22H0z" fill="#ffd15c" /><path d="M0 3.500V1h12v2z" fill="#dd9c0c" />
        <path d="M5 23.500V15q0-2.500 2.500-2.500h13q2.500 0 2.500 2.500v8.500h-4.500V17h-9v6.500z" fill="#3a96dd" />
      </svg>
      <div className="ml-[18px] flex w-[61px] justify-center bg-[#51554a] pt-[10px]">
        <svg viewBox="0 0 28 28" className="size-7">
          <circle cx="14" cy="14" r="14" fill="#fc4" />
          <path d="M14 14 1.880 7A14 14 0 0 0 14 28l5.500-11z" fill="#1da462" />
          <path d="M14 14H26.500L26.120 7A14 14 0 0 0 1.880 7L8 17z" fill="#dd4b3e" /><path d="M14 7.500h12.400A14 14 0 0 1 14 28l6-11z" fill="#fc4" />
          <circle cx="14" cy="14" r="6.500" fill="#f1f1f1" /><circle cx="14" cy="14" r="5" fill="#4a8af4" />
        </svg>
      </div>
      <div className="ml-[17px] mt-[10px]"><Telegram /></div>
      <div className="relative ml-[34px] mt-[10px]">
        <Telegram />
        <div className="absolute left-[12px] top-[17px] flex h-[14px] w-[19px] items-center justify-center rounded-[4px] bg-[#f03a38] text-[11px] leading-3">..64</div>
      </div>
      <svg viewBox="0 0 112 22" className="ml-auto mt-[14px] h-[22px] w-[112px]" fill="none" stroke="#fff" strokeWidth="1.300">
        <path d="M1 15l8-8 8 8" />
        <path d="M34 7.500h13.500V17H32v-4.500" /><path d="M34 9h12v6.500H34z" fill="#fff" stroke="none" /><path d="M48.500 10.500v3" strokeWidth="2" /><path d="M30 5.500v2M33.500 5.500v2M29.500 8h4.500v2.500h-4.500zM31.800 11v4" />
        <path d="M64 4.500h14v11.500H62V9.500M70 16v4M65.500 20h9" /><path d="M60 5h4v4h-4zM61.500 9v5" />
        <path d="M89 9h2.500l4.500-4v13.500l-4.500-4H89zM98.500 9q1.500 2.500 0 5M101.500 7q3 4.500 0 9" /><path d="M104.500 5q4.500 6.500 0 13" stroke="#888" />
      </svg>
      <div className="ml-[11px] mt-[14px] text-[14.500px] leading-6"><Fit w={26}>РУС</Fit></div>
      <div className="ml-[17px] mt-[3px] w-[70px] text-center text-[14.500px] leading-[22px]">
        <div><Fit w={34}>12:08</Fit></div>
        <div><Fit w={69}>08.07.2021</Fit></div>
      </div>
      <div className="relative ml-[23px] mr-[17px] mt-[15px]">
        <svg viewBox="0 0 20 21" className="h-[21px] w-5"><path d="M0 0h20v17H11l-4 4v-4H0z" fill="#fff" /><path d="M4 4.500h12M4 8.500h12M4 12.500h9" stroke="#262a1c" strokeWidth="1.300" /></svg>
        <div className="absolute left-[10px] top-[10px] flex size-5 items-center justify-center rounded-full border-2 border-[#777] bg-[#333] text-[12px] font-bold leading-4">2</div>
      </div>
    </div>
  );
}

export default function App() {
  return (
    <div className="relative flex h-[1072px] w-[1906px] flex-col overflow-hidden bg-white">
      <TabStrip />
      <Toolbar />
      <Header />
      <div className="flex min-h-0 flex-1">
        <Sidebar />
        <main className="flex min-w-0 flex-1 flex-col">
          <div className="flex h-[60px] shrink-0 items-center border-b border-[#dadce0] pl-[13px] text-[#757575]">
            <div className={"text-[22px] leading-7 text-[#202124] " + PRODUCT}><Fit w={101}>Мой диск</Fit></div>
            <svg viewBox="0 0 12 6" className="ml-[13px] mt-[2px] h-[6px] w-3"><path d="M0 0h12L6 6z" fill="#8b8e91" /></svg>
            <svg viewBox="0 0 22 18" className="ml-auto h-[18px] w-[22px]" fill="none" stroke="#757575" strokeWidth="2"><path d="M1 1h20v16H1zM6 1v16M1 6.300h20M1 11.700h20" /></svg>
            <MdInfoOutline size={30} className="ml-[34px] mr-[30px]" />
          </div>
          <div className="flex min-h-0 flex-1">
            <Content />
            <div className="w-[13px] shrink-0 pt-px"><div className="h-[147px] w-3 border border-[#bbb] bg-[#c9c9c9]" /></div>
          </div>
        </main>
        <SidePanel />
      </div>
      <Taskbar />
      <svg viewBox="0 0 54 98" className="absolute left-[1292px] top-[531px] h-[98px] w-[54px]" fill="none" stroke="#ed1c24" strokeWidth="4">
        <path d="M16 3h23v45h12.500L27 92 3.500 48H16z" />
      </svg>
      <div className={"absolute left-[1065px] top-[718px] text-[17px] font-bold leading-6 text-[#e31b23] " + UI}>
        <div><Fit w={346}>1. Заходим в папку по ссылке, которую</Fit></div>
        <div><Fit w={355}>куратор (я) отправлял ранее. Эту ссылку</Fit></div>
        <div><Fit w={123}>терять нельзя</Fit></div>
      </div>
    </div>
  );
}
